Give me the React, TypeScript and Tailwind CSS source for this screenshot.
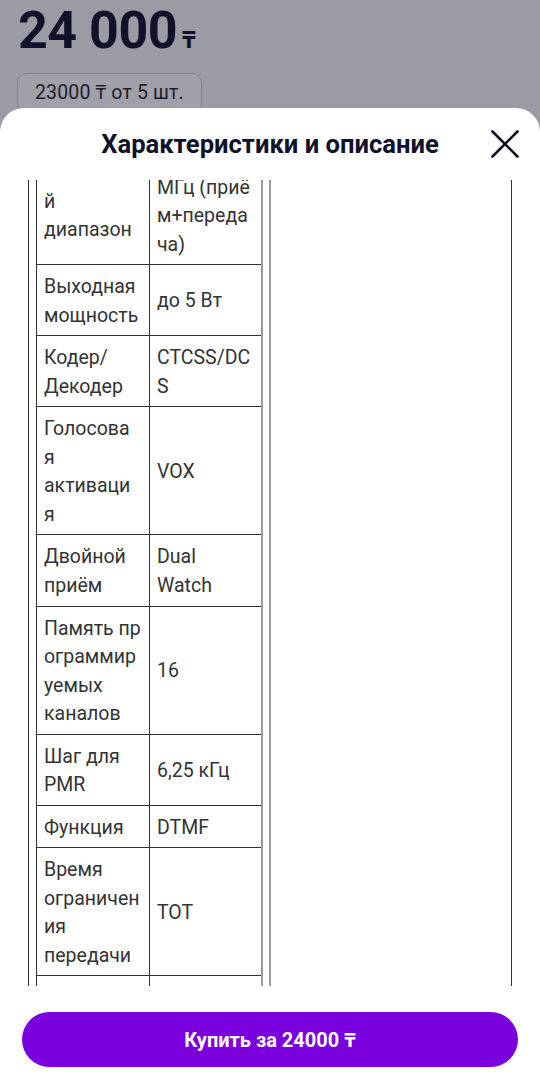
import React from "react";

type Row = { a: string[]; b: string[] };

const rows: Row[] = [
  { a: ["Частотны", "й", "диапазон"], b: ["400-470", "МГц (приё", "м+переда", "ча)"] },
  { a: ["Выходная", "мощность"], b: ["до 5 Вт"] },
  { a: ["Кодер/", "Декодер"], b: ["CTCSS/DC", "S"] },
  { a: ["Голосова", "я", "активаци", "я"], b: ["VOX"] },
  { a: ["Двойной", "приём"], b: ["Dual", "Watch"] },
  { a: ["Память пр", "ограммир", "уемых", "каналов"], b: ["16"] },
  { a: ["Шаг для", "PMR"], b: ["6,25 кГц"] },
  { a: ["Функция"], b: ["DTMF"] },
  { a: ["Время", "ограничен", "ия", "передачи"], b: ["TOT"] },
  { a: ["Индикатор", "разряда", "батареи"], b: ["есть"] },
];

function Lines({ lines }: { lines: string[] }) {
  return (
    <div className="whitespace-nowrap">
      {lines.map((l, i) => (
        <div key={i}>{l}</div>
      ))}
    </div>
  );
}

export default function App() {
  return (
    <div
      className="relative h-[1089px] w-[540px] overflow-hidden bg-[#9b9ba4]"
      style={{ fontFamily: "Roboto, 'Noto Sans', 'DejaVu Sans', sans-serif" }}
    >
      {/* page behind */}
      <div className="px-[18px] pt-[5px]">
        <div className="flex items-baseline text-[#10122a]">
          <span className="text-[52px] font-bold leading-[52px] tracking-[-0.5px]">24 000</span>
          <span className="ml-[5px] text-[24px] font-bold leading-none">₸</span>
        </div>
        <div className="-ml-px mt-[16px] inline-flex h-[40px] items-center rounded-[10px] border border-[#83838c] bg-[#a0a0a8] px-[17px] text-[19.5px] tracking-[0.15px] text-[#1d1e2c]">
          23000 ₸ от 5 шт.
        </div>
      </div>

      {/* bottom sheet */}
      <div className="absolute inset-x-0 top-[108px] bottom-0 flex flex-col rounded-t-[24px] bg-white">
        <div className="relative flex h-[72px] items-start justify-center pt-[20px]">
          <h2 className="text-[25.6px] font-bold leading-[32px] text-[#10122a]">Характеристики и описание</h2>
          <button className="absolute right-[21px] top-[22px] h-[28px] w-[28px]">
            <svg viewBox="0 0 28 28" width="28" height="28" fill="none" stroke="#10122a" strokeWidth="2.6" strokeLinecap="round">
              <path d="M1.5 1.5 26.5 26.5" />
              <path d="M26.5 1.5 1.5 26.5" />
            </svg>
          </button>
        </div>

        <div className="h-[806px] overflow-hidden">
          <div className="-mt-[43px] ml-[28px] flex w-[484px] border-x border-[#333]">
            <div className="pl-[7px]">
              <div className="w-[227px] border-l border-r-2 border-l-[#333] border-r-[#9a9a9a] text-[19.5px] leading-[28.5px] text-[#333]">
                {rows.map((r, i) => (
                  <div key={i} className="flex border-b border-[#333]">
                    <div className="flex w-[113px] shrink-0 items-center border-r border-[#333] px-[7px] pt-[8px] pb-[5.12px]">
                      <Lines lines={r.a} />
                    </div>
                    <div className="flex w-[111px] shrink-0 items-center px-[7px] pt-[8px] pb-[5.12px]">
                      <Lines lines={r.b} />
                    </div>
                  </div>
                ))}
              </div>
            </div>
            <div className="ml-[6px] flex-1 border-l-2 border-[#9a9a9a]" />
          </div>
        </div>

        <div className="px-[22px] pt-[26px]">
          <button className="flex h-[55px] w-full items-center justify-center rounded-full bg-[#7a00de] text-[20px] font-bold text-white">
            Купить за 24000 ₸
          </button>
        </div>
      </div>
    </div>
  );
}
